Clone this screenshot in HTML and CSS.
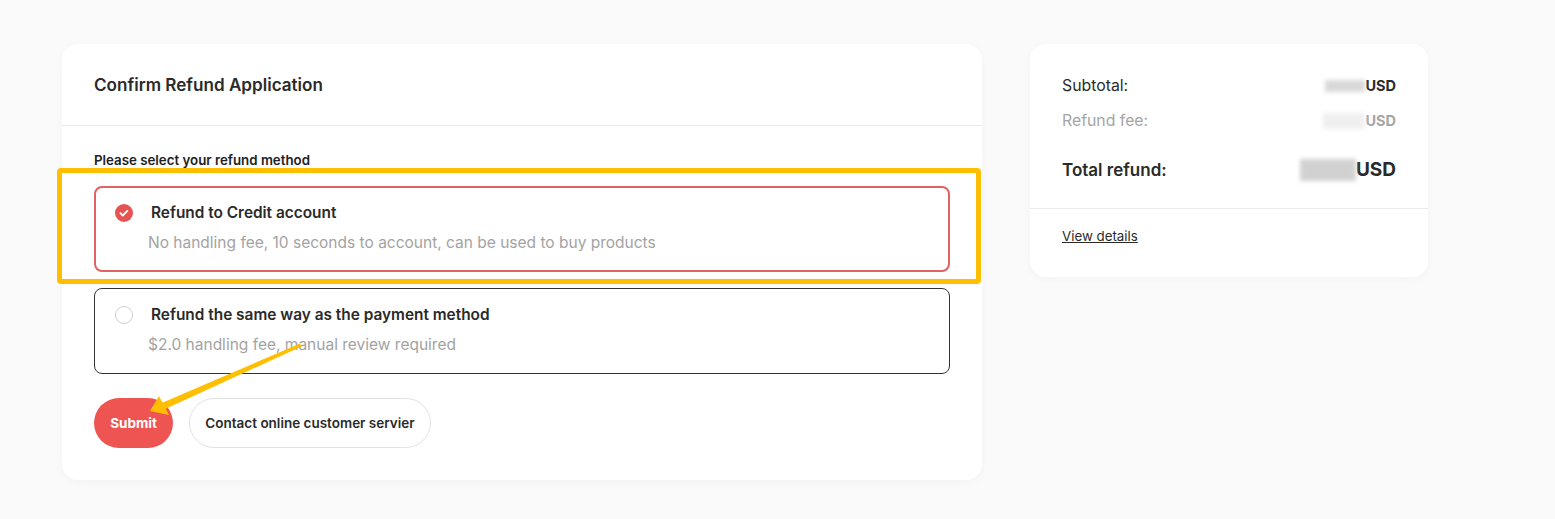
FILE: index.html
```html
<!DOCTYPE html>
<html lang="en">
<head>
<meta charset="utf-8">
<title>Confirm Refund Application</title>
<link rel="stylesheet" href="styles.css">
</head>
<body>
<div class="page">
  <section class="card main">
    <header class="card-head">Confirm Refund Application</header>
    <div class="card-body">
      <div class="label">Please select your refund method</div>
      <div class="option selected">
        <span class="radio checked">
          <svg viewBox="0 0 18 18" width="18" height="18"><circle cx="9" cy="9" r="9" fill="#e65353"/><path d="M5.4 9.2l2.4 2.3 4.6-4.6" fill="none" stroke="#fff" stroke-width="1.8" stroke-linecap="round" stroke-linejoin="round"/></svg>
        </span>
        <div class="opt-text">
          <div class="opt-title">Refund to Credit account</div>
          <div class="opt-desc">No handling fee, 10 seconds to account, can be used to buy products</div>
        </div>
      </div>
      <div class="option">
        <span class="radio"></span>
        <div class="opt-text">
          <div class="opt-title">Refund the same way as the payment method</div>
          <div class="opt-desc">$2.0 handling fee, manual review required</div>
        </div>
      </div>
      <div class="actions">
        <button class="btn primary">Submit</button>
        <button class="btn ghost">Contact online customer servier</button>
      </div>
    </div>
    <div class="highlight"></div>
  </section>

  <aside class="card summary">
    <div class="sum-body">
      <div class="row"><span>Subtotal:</span><span class="val"><i class="blur b1"></i>USD</span></div>
      <div class="row muted"><span>Refund fee:</span><span class="val"><i class="blur b2"></i>USD</span></div>
      <div class="row total"><span>Total refund:</span><span class="val"><i class="blur b3"></i>USD</span></div>
    </div>
    <div class="sum-foot"><a class="link">View details</a></div>
  </aside>

  <svg class="arrow" width="1555" height="519" viewBox="0 0 1555 519">
    <polygon points="300,343.5 301.5,346.5 163,410 160.5,403.5" fill="#ffbf00"/>
    <polygon points="150,411 159,396 169,415" fill="#ffbf00"/>
  </svg>
</div>
</body>
</html>
```
FILE: styles.css
```css
* { box-sizing: border-box; }
html, body { margin: 0; padding: 0; }
body {
  background: #fafafa;
  font-family: "Inter", "Liberation Sans", sans-serif;
  color: #222;
  width: 1555px;
  height: 519px;
  overflow: hidden;
}
.page {
  position: relative;
  display: flex;
  align-items: flex-start;
  gap: 48px;
  padding: 44px 0 0 62px;
  height: 519px;
}
.card {
  background: #fff;
  border-radius: 16px;
  box-shadow: 0 2px 10px rgba(0,0,0,0.03);
}
.main { position: relative; width: 920px; }
.card-head {
  height: 82px;
  display: flex;
  align-items: center;
  padding: 0 32px;
  font-size: 17.1px;
  font-weight: 600;
  color: #2a2a2a;
  border-bottom: 1px solid #ececec;
}
.card-body { padding: 26px 32px 32px; }
.label {
  font-size: 13.3px;
  line-height: 16px;
  font-weight: 600;
  color: #222;
  margin-bottom: 18px;
}
.option {
  display: flex;
  align-items: flex-start;
  border: 1px solid #333;
  border-radius: 8px;
  padding: 16px 20px 18px 20px;
  height: 86px;
}
.option + .option { margin-top: 16px; }
.option.selected { border: 2px solid #e06262; padding: 15px 19px 17px 19px; }
.radio {
  width: 18px;
  height: 18px;
  flex: 0 0 18px;
  margin-top: 1px;
  margin-right: 18px;
  border: 1px solid #cfcfcf;
  border-radius: 50%;
}
.radio.checked { border: none; }
.radio svg { display: block; }
.opt-title {
  font-size: 15.4px;
  line-height: 20px;
  font-weight: 600;
  color: #2a2a2a;
}
.opt-desc {
  margin-top: 10px;
  margin-left: -3px;
  font-size: 15.5px;
  line-height: 20px;
  color: #a3a3a3;
}
.actions {
  display: flex;
  gap: 16px;
  margin-top: 24px;
}
.btn {
  height: 50px;
  border-radius: 25px;
  font-family: inherit;
  font-size: 13.5px;
  font-weight: 600;
  cursor: pointer;
  white-space: nowrap;
}
.btn.primary {
  background: #ee5452;
  color: #fff;
  border: none;
  padding: 0;
  width: 79px;
  font-weight: 700;
}
.btn.ghost {
  background: #fff;
  color: #2a2a2a;
  border: 1px solid #e2e2e2;
  padding: 0;
  width: 242px;
}
.highlight {
  position: absolute;
  left: -5px;
  top: 124px;
  width: 924px;
  height: 116px;
  border: 5px solid #ffbf00;
  border-radius: 4px;
  pointer-events: none;
}
.summary { width: 398px; }
.sum-body {
  padding: 32px 32px 26px;
  border-bottom: 1px solid #ececec;
}
.row {
  display: flex;
  justify-content: space-between;
  align-items: center;
  font-size: 15.8px;
  line-height: 20px;
  color: #2a2a2a;
}
.row + .row { margin-top: 15px; }
.row .val { font-weight: 700; font-size: 14.5px; display: flex; align-items: center; }
.row.muted { color: #a5a5a5; }
.row.total {
  margin-top: 27px;
  font-size: 17px;
  line-height: 24px;
  font-weight: 600;
}
.row.total .val { font-size: 19px; font-weight: 700; }
.blur {
  display: inline-block;
  background: #cfcfcf;
  filter: blur(2px);
  opacity: 0.8;
}
.b1 { width: 40px; height: 12px; }
.b2 { width: 42px; height: 16px; background: #ececec; }
.b3 { width: 56px; height: 22px; background: #c6c6c6; }
.sum-foot { padding: 16px 32px 31px; }
.link {
  font-size: 13.3px;
  line-height: 20px;
  color: #2a2a2a;
  text-decoration: underline;
}
.arrow {
  position: absolute;
  left: 0;
  top: 0;
  pointer-events: none;
}
```
